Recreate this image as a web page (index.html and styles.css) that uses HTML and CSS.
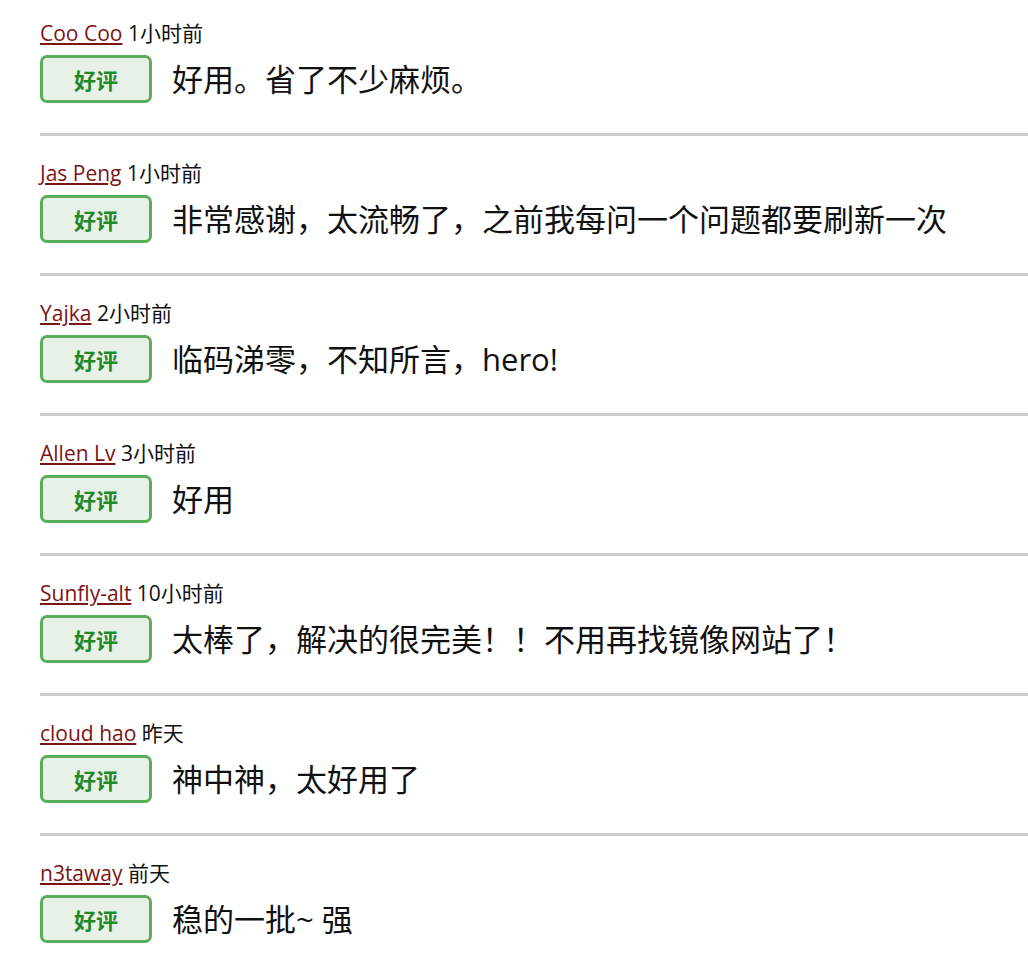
FILE: index.html
```html
<!DOCTYPE html>
<html lang="zh-CN">
<head>
<meta charset="utf-8">
<title>评价</title>
<link rel="stylesheet" href="styles.css">
</head>
<body>
<div class="list">
  <div class="item">
    <div class="meta"><a class="user" href="#">Coo Coo</a> 1小时前</div>
    <div class="row"><span class="badge">好评</span><span class="text">好用。省了不少麻烦。</span></div>
  </div>
  <div class="item">
    <div class="meta"><a class="user" href="#">Jas Peng</a> 1小时前</div>
    <div class="row"><span class="badge">好评</span><span class="text">非常感谢，太流畅了，之前我每问一个问题都要刷新一次</span></div>
  </div>
  <div class="item">
    <div class="meta"><a class="user" href="#">Yajka</a> 2小时前</div>
    <div class="row"><span class="badge">好评</span><span class="text">临码涕零，不知所言，hero!</span></div>
  </div>
  <div class="item">
    <div class="meta"><a class="user" href="#">Allen Lv</a> 3小时前</div>
    <div class="row"><span class="badge">好评</span><span class="text">好用</span></div>
  </div>
  <div class="item">
    <div class="meta"><a class="user" href="#">Sunfly-alt</a> 10小时前</div>
    <div class="row"><span class="badge">好评</span><span class="text">太棒了，解决的很完美！！不用再找镜像网站了！</span></div>
  </div>
  <div class="item">
    <div class="meta"><a class="user" href="#">cloud hao</a> 昨天</div>
    <div class="row"><span class="badge">好评</span><span class="text">神中神，太好用了</span></div>
  </div>
  <div class="item last">
    <div class="meta"><a class="user" href="#">n3taway</a> 前天</div>
    <div class="row"><span class="badge">好评</span><span class="text">稳的一批~ 强</span></div>
  </div>
</div>
</body>
</html>
```

FILE: styles.css
```css
html, body {
  margin: 0;
  padding: 0;
  background: #ffffff;
}
body {
  font-family: "Open Sans", "Noto Sans CJK SC", sans-serif;
  color: #111111;
  overflow: hidden;
}
.list {
  padding: 19px 0 0 40px;
}
.item {
  padding-bottom: 30px;
  border-bottom: 3px solid #cccccc;
  margin-bottom: 23px;
}
.item.last {
  border-bottom: none;
}
.meta {
  font-size: 21px;
  line-height: 28px;
  color: #111111;
  white-space: nowrap;
}
.user {
  color: #7d1414;
  text-decoration: underline;
}
.row {
  display: flex;
  align-items: center;
  gap: 20px;
  margin-top: 8px;
}
.badge {
  box-sizing: border-box;
  flex: none;
  width: 112px;
  height: 48px;
  display: flex;
  align-items: center;
  justify-content: center;
  border: 3px solid #5aae5a;
  border-radius: 7px;
  background: #e8f1e8;
  color: #23882a;
  font-weight: bold;
  font-size: 22px;
  font-family: "Noto Sans CJK SC", sans-serif;
}
.text {
  font-size: 31px;
  line-height: 40px;
  color: #111111;
  white-space: nowrap;
}
```
